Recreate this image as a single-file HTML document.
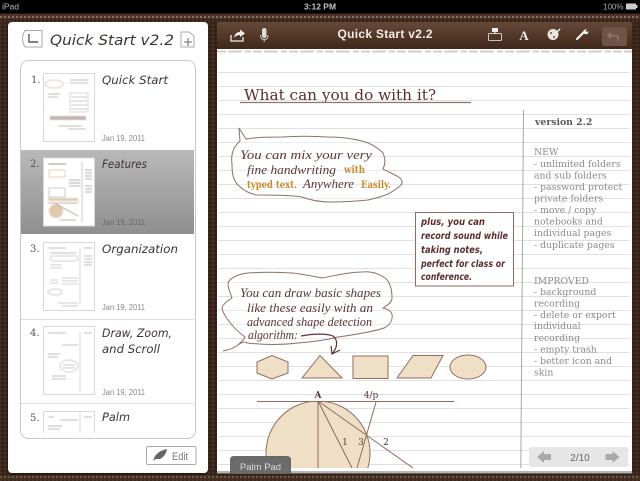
<!DOCTYPE html>
<html><head><meta charset="utf-8"><style>
html,body{margin:0;padding:0;background:#000;width:640px;height:481px;overflow:hidden}
svg{display:block;filter:blur(.35px)}
.h{font-family:"DejaVu Sans",sans-serif;font-style:oblique;fill:#3d3533}
.w{font-family:"Liberation Serif",serif;font-style:italic;fill:#5a3636;font-size:13px}
.o{font-family:"DejaVu Serif",serif;font-weight:bold;fill:#c98a2e;font-size:10px}
.n{font-family:"DejaVu Serif",serif;font-size:10px;fill:#555}
.d{font-family:"Liberation Sans",sans-serif;font-size:8px;fill:#888}
.r{font-family:"DejaVu Serif",serif;font-size:9.3px;fill:#8a8a8a}
.b{font-family:"DejaVu Sans",sans-serif;font-style:oblique;font-size:9.5px;fill:#5a2d2d;font-weight:bold}
</style></head><body>
<svg width="640" height="481" viewBox="0 0 640 481" xmlns="http://www.w3.org/2000/svg">
<defs>
<pattern id="lea" width="4" height="4" patternUnits="userSpaceOnUse"><rect width="4" height="4" fill="#38241a"/><rect x="0" y="0" width="2" height="2" fill="#4a3225"/><rect x="2" y="2" width="1" height="1" fill="#2a1a12"/></pattern>
<pattern id="st" width="4" height="5" patternUnits="userSpaceOnUse"><rect width="4" height="5" fill="#4b3427"/><rect x="0" y="1" width="2" height="2" fill="#86705f"/></pattern>
<linearGradient id="tb" x1="0" y1="0" x2="0" y2="1"><stop offset="0" stop-color="#664938"/><stop offset=".5" stop-color="#523727"/><stop offset="1" stop-color="#3d2618"/></linearGradient>
<linearGradient id="sel" x1="0" y1="0" x2="0" y2="1"><stop offset="0" stop-color="#b9b9b9"/><stop offset="1" stop-color="#8f8f8f"/></linearGradient>
<filter id="bl" x="-10%" y="-10%" width="120%" height="120%"><feGaussianBlur stdDeviation=".5"/></filter>
<filter id="sh" x="-5%" y="-5%" width="110%" height="110%"><feDropShadow dx="0" dy="1" stdDeviation="1" flood-color="#000" flood-opacity=".6"/></filter>
<clipPath id="cp"><rect x="218" y="49" width="412" height="422"/></clipPath>
<clipPath id="cl"><rect x="21" y="61" width="173" height="376" rx="8"/></clipPath>
<clipPath id="cc"><rect x="250" y="401" width="140" height="67"/></clipPath>
<g id="th"><rect width="51" height="68" fill="#fff" stroke="#d8d8d8" stroke-width="1"/></g>
</defs>

<rect width="640" height="481" fill="url(#lea)"/>
<rect y="14" width="640" height="5" fill="url(#st)"/>
<rect y="475" width="640" height="5" fill="url(#st)" opacity=".6"/>
<rect width="640" height="13.5" fill="#000"/>
<text x="2" y="9.5" font-family="Liberation Sans,sans-serif" font-size="8.5" fill="#bbb">iPad</text>
<text x="320" y="9.5" text-anchor="middle" font-family="Liberation Sans,sans-serif" font-size="8.5" font-weight="bold" fill="#c4c4c4">3:12 PM</text>
<text x="603" y="9.5" font-family="Liberation Sans,sans-serif" font-size="8" fill="#aaa">100%</text>
<rect x="626" y="3.5" width="10" height="6" fill="#ccc"/><rect x="636" y="5" width="1.5" height="3" fill="#ccc"/>

<!-- left panel -->
<rect x="8" y="22" width="200" height="451" rx="4" fill="#fff" filter="url(#sh)"/>
<path d="M25 30.5H42V47H25Q20 39 25 30.5Z" fill="none" stroke="#aaa"/>
<path d="M29 34V42H38" fill="none" stroke="#555" stroke-width="1.4"/>
<text class="h" x="50" y="45" font-size="14" textLength="124" lengthAdjust="spacingAndGlyphs">Quick Start v2.2</text>
<path d="M181 32H189L194 36V47H181Z" fill="none" stroke="#aaa"/>
<path d="M184 42H192M188 38V46" stroke="#666" fill="none"/>

<g clip-path="url(#cl)">
<rect x="21" y="150" width="173" height="84" fill="url(#sel)"/>
<path d="M21 319.5H194M21 403.5H194" stroke="#ddd"/>
</g>
<rect x="20.5" y="60.5" width="175" height="378" rx="8" fill="none" stroke="#c8c8c8"/>

<text class="n" x="31" y="83">1.</text>
<text class="n" x="30" y="167">2.</text>
<text class="n" x="30" y="252">3.</text>
<text class="n" x="30" y="336">4.</text>
<text class="n" x="30" y="421">5.</text>

<use href="#th" x="43.5" y="73.5"/>
<use href="#th" x="43.5" y="158"/>
<use href="#th" x="43.5" y="242.5"/>
<use href="#th" x="43.5" y="326.5"/>
<path d="M43.5 433V411.5H94.500V433" fill="#fff" stroke="#d8d8d8"/>

<g filter="url(#bl)" opacity=".8">
<!-- thumb 1 -->
<ellipse cx="54" cy="84" rx="9" ry="4" fill="none" stroke="#d3bdb6"/>
<path d="M70 80H88M70 83H88M48 94H60M48 97H58" stroke="#aaa" fill="none"/>
<path d="M70 93H88V112H70Z" stroke="#ccc" fill="none"/>
<path d="M71 97H87M71 101H87M71 105H87M71 109H87" stroke="#bbb"/>
<rect x="50" y="116" width="36" height="4" fill="#b5a5a5"/>
<path d="M58 126H82M68 129H86" stroke="#aaa"/>
<!-- thumb 2 -->
<path d="M48 164H66" stroke="#777"/><path d="M82 162V222" stroke="#bbb"/>
<rect x="49" y="170" width="16" height="7" fill="none" stroke="#dfc6a8"/>
<path d="M69 180H80M69 183H80M69 186H80M85 170H92M85 173H92M85 176H92M85 179H92M85 186H92M85 189H92M85 192H92" stroke="#999"/>
<rect x="49" y="188" width="16" height="9" fill="none" stroke="#bbb"/>
<rect x="48" y="198" width="30" height="3" fill="#dcc3a3"/>
<circle cx="56" cy="211" r="7" fill="#d8bd9c"/>
<path d="M48 203H78M56 204L78 216M60 220H76" stroke="#b09a94"/>
<!-- thumb 3 -->
<path d="M48 248H66M84 248H92M84 256H92M84 259H92M84 262H92M84 265H92M50 253H76" stroke="#a9a9a9"/>
<path d="M80 248V305" stroke="#ccc"/>
<rect x="50" y="256" width="28" height="5" rx="2.500" fill="none" stroke="#c4c4c4"/>
<path d="M50 265H62M50 268H62M62 278H78M62 281H78M62 284H78M50 280H58M50 283H58" stroke="#c4c4c4"/>
<ellipse cx="55" cy="292" rx="7" ry="3" fill="none" stroke="#c4c4c4"/>
<path d="M58 303H78M62 306H78" stroke="#bbb"/>
<!-- thumb 4 -->
<path d="M48 333H66M84 333H92M62 345H78M48 354H60M48 357H58M52 376H66M52 379H66" stroke="#aaa"/>
<path d="M80 332V392" stroke="#ccc"/>
<ellipse cx="69" cy="366" rx="9" ry="6" fill="none" stroke="#c4c4c4"/>
<path d="M63 365H75M63 368H75" stroke="#bbb"/>
<!-- thumb 5 -->
<path d="M48 417H54M60 420H78M84 417H92M48 426H62M48 429H60" stroke="#aaa"/>
<path d="M80 412V433" stroke="#ccc"/>
</g>

<text class="h" x="102" y="84" font-size="11.500" textLength="66" lengthAdjust="spacingAndGlyphs">Quick Start</text>
<text class="h" x="102" y="168" font-size="11.500" textLength="45" lengthAdjust="spacingAndGlyphs">Features</text>
<text class="h" x="102" y="253" font-size="11.500" textLength="76" lengthAdjust="spacingAndGlyphs">Organization</text>
<text class="h" x="102" y="337" font-size="11.500" textLength="70" lengthAdjust="spacingAndGlyphs">Draw, Zoom,</text>
<text class="h" x="102" y="353" font-size="11.500" textLength="58" lengthAdjust="spacingAndGlyphs">and Scroll</text>
<text class="h" x="102" y="421" font-size="11.500" textLength="28" lengthAdjust="spacingAndGlyphs">Palm</text>
<text class="d" x="102" y="141" textLength="43" lengthAdjust="spacingAndGlyphs">Jan 19, 2011</text>
<text class="d" x="102" y="225" style="fill:#666" textLength="43" lengthAdjust="spacingAndGlyphs">Jan 19, 2011</text>
<text class="d" x="102" y="310" textLength="43" lengthAdjust="spacingAndGlyphs">Jan 19, 2011</text>
<text class="d" x="102" y="395" textLength="43" lengthAdjust="spacingAndGlyphs">Jan 19, 2011</text>

<rect x="146.500" y="446.500" width="49.500" height="18" rx="1.500" fill="#fff" stroke="#aaa"/>
<path d="M153 461L155 456Q160 450 167 449Q166 456 160 459L156 459Z" fill="#666"/>
<text x="172" y="460" font-family="Liberation Sans,sans-serif" font-size="11" fill="#777" textLength="16" lengthAdjust="spacingAndGlyphs">Edit</text>

<!-- right page -->
<rect x="217" y="22" width="415" height="451" rx="3" fill="#fff" filter="url(#sh)"/>
<path d="M217 50V25Q217 22 220 22H629Q632 22 632 25V50Z" fill="url(#tb)"/>
<rect x="217" y="49" width="415" height="5" fill="#fff"/>
<path d="M217 51.500H632" stroke="#cfcfcf" stroke-width="2" stroke-dasharray="9 2 14 3 6 2"/>
<g clip-path="url(#cp)">
<path stroke="#e0e0e0" d="M218 72.500H630M218 86.500H630M218 100.500H630M218 114.500H630M218 128.500H630M218 142.500H630M218 156.500H630M218 170.500H630M218 184.500H630M218 198.500H630M218 212.500H630M218 226.500H630M218 240.500H630M218 254.500H630M218 268.500H630M218 282.500H630M218 296.500H630M218 310.500H630M218 324.500H630M218 338.500H630M218 352.500H630M218 366.500H630M218 380.500H630M218 394.500H630M218 408.500H630M218 422.500H630M218 436.500H630M218 450.500H630M218 464.500H630"/>
<path d="M523.500 110L520.800 468" stroke="#a8a8a8"/>
</g>
<rect x="217" y="471" width="415" height="2.500" fill="#b4b4b4"/>

<!-- toolbar icons -->
<path d="M231 35V41H243V37" fill="none" stroke="#eee" stroke-width="1.300"/>
<path d="M234 38Q235 32 240 32V29.500L245 33.500L240 37V35Q236 35 234 38Z" fill="#f2f2f2"/>
<rect x="262" y="28" width="4.500" height="10" rx="2.200" fill="#ddd"/>
<path d="M260.500 35Q260.500 39.500 264.200 39.500Q268 39.500 268 35M264.200 39.500V42" fill="none" stroke="#ccc"/>
<text x="385" y="38" text-anchor="middle" font-family="Liberation Sans,sans-serif" font-size="12" font-weight="bold" fill="#f1ebe4" textLength="95" lengthAdjust="spacing">Quick Start v2.2</text>
<rect x="488.500" y="33.500" width="13" height="7" rx="1" fill="none" stroke="#cfc5bb"/>
<rect x="492" y="28" width="6" height="4" fill="#eee"/><path d="M495 32V34" stroke="#eee"/>
<text x="524" y="40" text-anchor="middle" font-family="Liberation Serif,serif" font-size="13" font-weight="bold" fill="#eee">A</text>
<circle cx="553" cy="34.500" r="5.500" fill="#e8e4df"/><circle cx="551" cy="33" r="1" fill="#6a4d3b"/><circle cx="554" cy="37" r="1" fill="#6a4d3b"/><path d="M554 35L560 29" stroke="#eee" stroke-width="1.500"/>
<path d="M577 39L584 32" stroke="#f2f2f2" stroke-width="2.200" stroke-linecap="round"/>
<path d="M583.500 32.500Q583 29 587 29.300L585.500 31L587 32L588.500 31Q588.500 35 584.500 34Z" fill="#f2f2f2"/>
<rect x="602" y="27" width="25" height="19" rx="2" fill="#6f5345"/>
<path d="M611 33L608 35.500L611 38M608.500 35.500H615Q618 35.500 618 38.500V41" fill="none" stroke="#8c7264" stroke-width="1.800"/>

<!-- heading -->
<text x="244" y="100" font-family="DejaVu Serif,serif" font-size="15" fill="#5b2f2f" textLength="192" lengthAdjust="spacingAndGlyphs">What can you do with it?</text>
<path d="M240 102.500H471" stroke="#8f7272" stroke-width="1.200"/>

<!-- bubble 1 -->
<path d="M246 139L239 128L240 141C232 148 231 157 232 164C232 173 233 180 238 185C244 191 250 194 257 195C272 195 290 195 302 197C310 200 318 202 330 202C345 202 358 201 368 200C380 197 388 195 393 191C398 188 403 184 402 181C400 176 392 174 383 169C386 163 385 158 383 153C377 147 370 143 362 141C350 138 340 137 328 137C312 136 296 136 282 137C270 137 256 137 246 139Z" fill="#fff" fill-opacity=".35" stroke="#8f6f68" stroke-width="1"/>
<text class="w" x="240" y="159" textLength="132" lengthAdjust="spacingAndGlyphs">You can mix your very</text>
<text class="w" x="247" y="174" textLength="89" lengthAdjust="spacingAndGlyphs">fine handwriting</text>
<text class="o" x="344" y="173" textLength="21" lengthAdjust="spacingAndGlyphs">with</text>
<text class="o" x="247" y="188" textLength="50" lengthAdjust="spacingAndGlyphs">typed text.</text>
<text class="w" x="303" y="188" textLength="51" lengthAdjust="spacingAndGlyphs">Anywhere</text>
<text class="o" x="361" y="188" textLength="30" lengthAdjust="spacingAndGlyphs">Easily.</text>

<!-- box -->
<rect x="415.500" y="212.500" width="98" height="73.500" fill="#fff" stroke="#8f6a66"/>
<text class="b" x="421" y="225" textLength="64" lengthAdjust="spacingAndGlyphs">plus, you can</text>
<text class="b" x="421" y="239" textLength="87" lengthAdjust="spacingAndGlyphs">record sound while</text>
<text class="b" x="421" y="253" textLength="62" lengthAdjust="spacingAndGlyphs">taking notes,</text>
<text class="b" x="421" y="267" textLength="84" lengthAdjust="spacingAndGlyphs">perfect for class or</text>
<text class="b" x="421" y="280" textLength="51" lengthAdjust="spacingAndGlyphs">conference.</text>

<!-- right column -->
<text x="535" y="125" font-family="DejaVu Serif,serif" font-size="9.300" font-weight="bold" fill="#585858">version 2.2</text>
<text class="r" x="534" y="155">NEW</text>
<text class="r" x="534" y="167">- unlimited folders</text>
<text class="r" x="534" y="178.500">and sub folders</text>
<text class="r" x="534" y="190">- password protect</text>
<text class="r" x="534" y="201.500">private folders</text>
<text class="r" x="534" y="213">- move / copy</text>
<text class="r" x="534" y="224.500">notebooks and</text>
<text class="r" x="534" y="236">individual pages</text>
<text class="r" x="534" y="248">- duplicate pages</text>
<text class="r" x="534" y="284">IMPROVED</text>
<text class="r" x="534" y="295">- background</text>
<text class="r" x="534" y="306.500">recording</text>
<text class="r" x="534" y="318">- delete or export</text>
<text class="r" x="534" y="329">individual</text>
<text class="r" x="534" y="341">recording</text>
<text class="r" x="534" y="352.500">- empty trash</text>
<text class="r" x="534" y="364">- better icon and</text>
<text class="r" x="534" y="375.500">skin</text>

<!-- bubble 2 -->
<path d="M223 351C229 350 234 348 238 345C242 342 245 341 247 343C265 345 282 345 298 343C312 342 326 340 338 337C352 335 372 332 384 328C390 325 393 320 392 314C391 311 387 309 383 308C388 305 392 302 392 298C392 290 390 282 385 278C378 273 370 271 362 272C348 272 334 276 322 278C312 276 302 274 292 273C278 272 262 272 248 273C238 274 230 278 228 283C228 290 231 294 232 298C227 301 223 304 222 308C223 314 228 320 232 325C236 330 241 334 245 337C243 341 240 343 238 345" fill="#fff" fill-opacity=".35" stroke="#8f6f68"/>
<text class="w" x="240" y="297" textLength="141" lengthAdjust="spacingAndGlyphs">You can draw basic shapes</text>
<text class="w" x="247" y="312" textLength="126" lengthAdjust="spacingAndGlyphs">like these easily with an</text>
<text class="w" x="247" y="326" textLength="125" lengthAdjust="spacingAndGlyphs">advanced shape detection</text>
<text class="w" x="248" y="339" textLength="50" lengthAdjust="spacingAndGlyphs">algorithm:</text>
<path d="M301 336C312 334 326 333 333 336C338 340 338 347 332 354M331 346L332 354L340 350" fill="none" stroke="#5a3636" stroke-width="1.200"/>

<!-- shapes -->
<g fill="#efdfc7" stroke="#8f6f60" stroke-width="1">
<path d="M257 362L272 355.500L288 362V373L272 379L257 373Z"/>
<path d="M302 378L320 355.500L342 378Z"/>
<rect x="353" y="356" width="35" height="22.500"/>
<path d="M397 378L413 355.500H443L431 378Z"/>
<ellipse cx="468" cy="367" rx="18" ry="12"/>
<circle cx="318" cy="453" r="52" clip-path="url(#cc)"/>
</g>
<path d="M257 401.500H454" stroke="#8f6a60"/>
<g stroke="#8f6a60" fill="none">
<path d="M318 401V468M318 401L352 468M318 401L413 468M376 402L357 468"/>
</g>
<g font-family="DejaVu Serif,serif" font-size="9" fill="#5a3636">
<text x="318" y="398" text-anchor="middle" font-weight="bold">A</text>
<text x="371" y="398" text-anchor="middle">4/p</text>
<text x="345" y="445" text-anchor="middle">1</text>
<text x="361" y="445" text-anchor="middle">3</text>
<text x="386" y="445" text-anchor="middle">2</text>
</g>

<!-- palm pad -->
<path d="M230 473V460Q230 456 234 456H287Q291 456 291 460V473Z" fill="#5a5a5a" fill-opacity=".9"/>
<rect x="232" y="458" width="57" height="15" rx="2" fill="#6b6b6b"/>
<text x="260.500" y="470" text-anchor="middle" font-family="Liberation Sans,sans-serif" font-size="9.500" fill="#ddd">Palm Pad</text>

<!-- pager -->
<rect x="529" y="447" width="99" height="20" rx="2.500" fill="#e6e6e6"/>
<path d="M537 457L544 451V454H551V460H544V463Z" fill="#a9a9a9"/>
<path d="M619.500 457L612.500 451V454H605.500V460H612.500V463Z" fill="#a9a9a9"/>
<text x="580" y="461" text-anchor="middle" font-family="Liberation Sans,sans-serif" font-size="10" fill="#666">2/10</text>
</svg>
</body></html>
